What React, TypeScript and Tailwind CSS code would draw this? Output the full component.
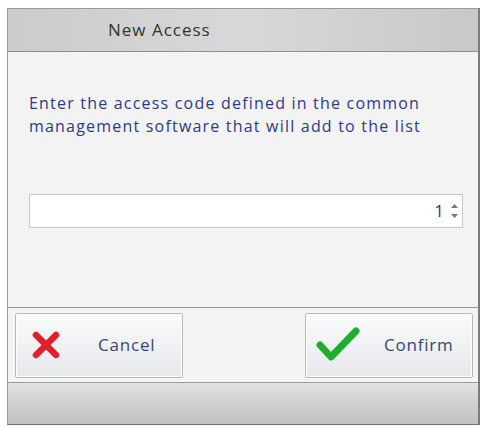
import React from 'react'

const CrossIcon = () => (
  <svg width="30" height="30" viewBox="0 0 30 30">
    <path d="M5 5 L25 25 M25 5 L5 25" stroke="#e3202a" strokeWidth="6.5" strokeLinecap="round" />
  </svg>
)

const CheckIcon = () => (
  <svg width="44" height="36" viewBox="0 0 44 36">
    <path d="M4 18 L15 30 L40 4" fill="none" stroke="#1fae2c" strokeWidth="7" strokeLinecap="round" strokeLinejoin="round" />
  </svg>
)

export default function App() {
  return (
    <div className="w-[484px] h-[426px] bg-white pt-[8px] pl-[7px] font-['Open_Sans',sans-serif]">
      <div className="w-[473px] h-[417px] flex flex-col border border-[#9a9a9a] border-r-2 border-r-[#7c7c7c] border-b-[#707070]">
        {/* title */}
        <div className="h-[43px] shrink-0 flex items-center border-b border-[#8f8f8f] bg-gradient-to-r from-[#cbcbcb] via-[#d8d8d8] to-[#c8c8c8]">
          <span className="ml-[100px] text-[17px] tracking-[1px] text-[#333]">New Access</span>
        </div>

        {/* body */}
        <div className="h-[256px] shrink-0 bg-[#f3f3f3] border-b border-[#999] pl-[21px] pr-[15px] pt-[40px]">
          <p className="text-[16px] tracking-[1.2px] leading-[23px] text-[#2d3a87]">
            Enter the access code defined in the common<br />
            management software that will add to the list
          </p>
          <div className="mt-[56px] h-[34px] flex items-center justify-end bg-white border border-[#c8c8c8] pr-[4px]">
            <span className="text-[17px] text-[#3b3b4a] mr-[7px]">1</span>
            <div className="flex flex-col gap-[6px]">
              <svg width="7" height="4" viewBox="0 0 7 4"><path d="M0 4 L3.5 0 L7 4Z" fill="#777" /></svg>
              <svg width="7" height="4" viewBox="0 0 7 4"><path d="M0 0 L3.5 4 L7 0Z" fill="#777" /></svg>
            </div>
          </div>
        </div>

        {/* buttons */}
        <div className="h-[75px] shrink-0 bg-[#f4f4f4] border-b border-[#9a9a9a] flex items-center justify-between pl-[7px] pr-[5px]">
          <button className="w-[168px] h-[65px] flex items-center border border-[#b9b9b9] rounded-[2px] bg-gradient-to-b from-[#fbfbfb] to-[#e6e8ec] shadow-[inset_0_0_0_1px_#fff]">
            <span className="ml-[15px]"><CrossIcon /></span>
            <span className="ml-[37px] text-[17px] tracking-[0.8px] text-[#3a4670]">Cancel</span>
          </button>
          <button className="w-[168px] h-[65px] flex items-center border border-[#b9b9b9] rounded-[2px] bg-gradient-to-b from-[#fbfbfb] to-[#e6e8ec] shadow-[inset_0_0_0_1px_#fff]">
            <span className="ml-[10px]"><CheckIcon /></span>
            <span className="ml-[24px] text-[17px] tracking-[0.8px] text-[#3a4670]">Confirm</span>
          </button>
        </div>

        {/* bottom bar */}
        <div className="flex-1 bg-gradient-to-b from-[#e2e2e2] via-[#d0d0d0] to-[#c2c2c2]" />
      </div>
    </div>
  )
}
